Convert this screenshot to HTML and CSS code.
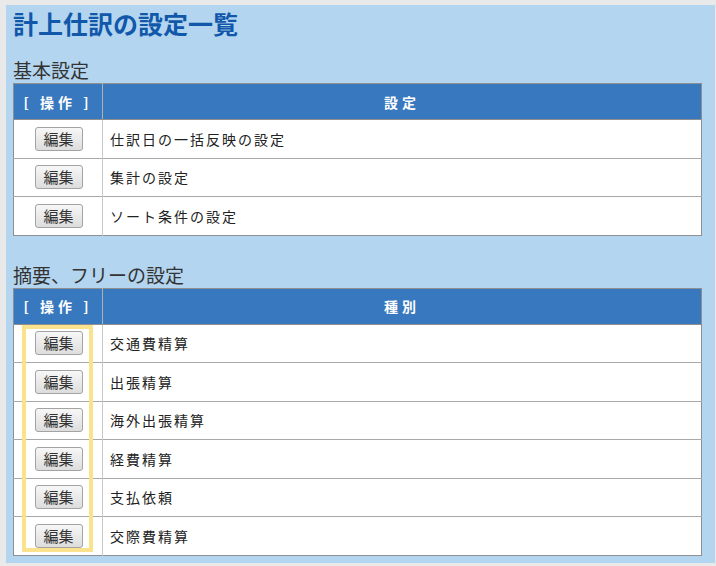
FILE: index.html
```html
<!DOCTYPE html>
<html lang="ja">
<head>
<meta charset="utf-8">
<title>計上仕訳の設定一覧</title>
<link rel="stylesheet" href="styles.css">
</head>
<body>
<div class="panel">
  <h1 class="title">計上仕訳の設定一覧</h1>

  <h2 class="section">基本設定</h2>
  <div class="tbl-wrap">
    <table class="list">
      <thead>
        <tr><th class="op">[ 操作 ]</th><th>設定</th></tr>
      </thead>
      <tbody>
        <tr><td class="op"><button class="btn">編集</button></td><td>仕訳日の一括反映の設定</td></tr>
        <tr><td class="op"><button class="btn">編集</button></td><td>集計の設定</td></tr>
        <tr><td class="op"><button class="btn">編集</button></td><td>ソート条件の設定</td></tr>
      </tbody>
    </table>
  </div>

  <h2 class="section second">摘要、フリーの設定</h2>
  <div class="tbl-wrap">
    <table class="list">
      <thead>
        <tr><th class="op">[ 操作 ]</th><th>種別</th></tr>
      </thead>
      <tbody>
        <tr><td class="op"><button class="btn">編集</button></td><td>交通費精算</td></tr>
        <tr><td class="op"><button class="btn">編集</button></td><td>出張精算</td></tr>
        <tr><td class="op"><button class="btn">編集</button></td><td>海外出張精算</td></tr>
        <tr><td class="op"><button class="btn">編集</button></td><td>経費精算</td></tr>
        <tr><td class="op"><button class="btn">編集</button></td><td>支払依頼</td></tr>
        <tr><td class="op"><button class="btn">編集</button></td><td>交際費精算</td></tr>
      </tbody>
    </table>
    <div class="highlight"></div>
  </div>
</div>
</body>
</html>
```

FILE: styles.css
```css
html, body {
  margin: 0;
  padding: 0;
  background: #e9e9e9;
  font-family: "Noto Sans CJK JP", "Noto Sans", sans-serif;
  color: #333;
}

.panel {
  margin: 5px 1px 0 6px;
  padding: 3px 13px 7px 7px;
  background: #b3d5ef;
}

.title {
  margin: 0;
  font-size: 25px;
  line-height: 30px;
  font-weight: bold;
  color: #1158ab;
}

.section {
  margin: 20px 0 1px 0;
  font-size: 19px;
  line-height: 24px;
  font-weight: normal;
  color: #333;
}

.section.second {
  margin-top: 27px;
  margin-bottom: 1px;
}

.tbl-wrap {
  position: relative;
}

.list {
  width: 689px;
  border-collapse: collapse;
  background: #fff;
  border: 1px solid #8f8f8f;
}

.list th {
  background: #3878be;
  color: #fff;
  font-size: 14px;
  font-weight: bold;
  letter-spacing: 4px;
  height: 35px;
  padding: 0;
  text-align: center;
  border-left: 1px solid #b0b0b0;
  border-bottom: 1px solid #8f8f8f;
}

.list td {
  height: 37.5px;
  padding: 0 0 0 7px;
  font-size: 14px;
  letter-spacing: 2px;
  color: #222;
  border-top: 1px solid #a8a8a8;
  border-left: 1px solid #c8c8c8;
  vertical-align: middle;
}

.list .op {
  width: 88px;
  border-left: none;
}

.list td.op {
  padding: 0;
  text-align: center;
}

.btn {
  width: 48px;
  height: 24px;
  margin-left: 1px;
  padding: 0;
  font-family: "Noto Sans CJK JP", sans-serif;
  font-size: 15px;
  line-height: 22px;
  color: #333;
  border: 1px solid #a3a3a3;
  border-radius: 3px;
  background: linear-gradient(#f7f7f7, #dddddd);
}

.highlight {
  position: absolute;
  left: 9px;
  top: 37px;
  width: 71px;
  height: 227px;
  box-sizing: border-box;
  border: 4px solid #fbe28c;
  pointer-events: none;
}
```
